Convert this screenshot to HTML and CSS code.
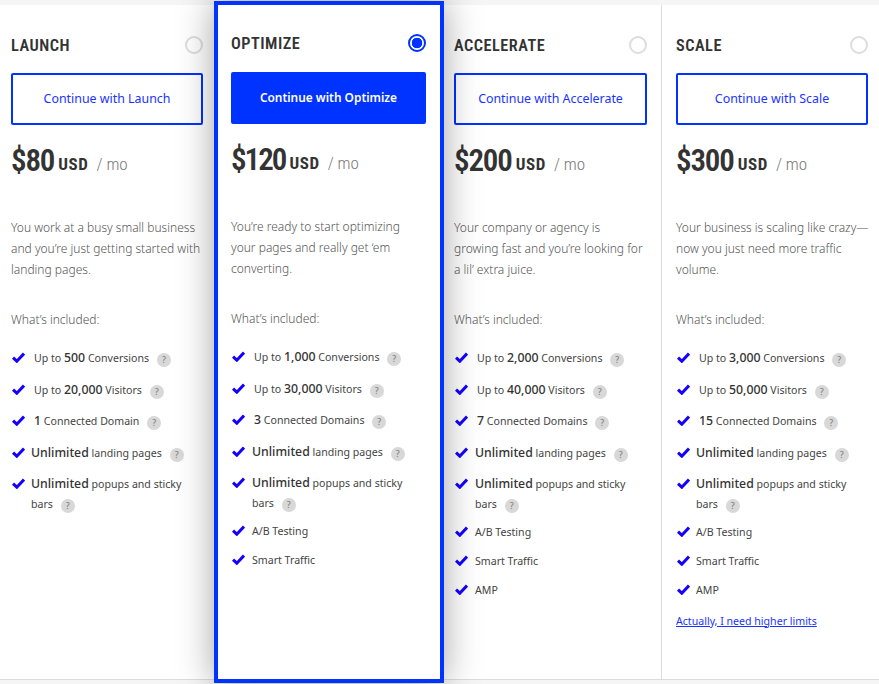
FILE: index.html
```html
<!DOCTYPE html>
<html lang="en">
<head>
<meta charset="utf-8">
<title>Plans</title>
<link rel="stylesheet" href="styles.css">
</head>
<body>
<svg class="defs" width="0" height="0" aria-hidden="true"><symbol id="chk" viewBox="0 0 13 11"><path d="M1 5.6 4.8 9.2 12 1.6" fill="none" stroke="currentColor" stroke-width="3"/></symbol></svg>
<main class="plans">
  <section class="plan plan-a">
    <header class="head"><h2>LAUNCH</h2><span class="radio"></span></header>
    <a class="btn">Continue with Launch</a>
    <p class="price"><b>$80</b> <strong>USD</strong> <span>/ mo</span></p>
    <p class="desc">You work at a busy small business and you’re just getting started with landing pages.</p>
    <p class="inc">What’s included:</p>
    <ul>
      <li><svg class="chk"><use href="#chk"/></svg><div class="tx in">Up to <b>500</b> Conversions <i>?</i></div></li>
      <li><svg class="chk"><use href="#chk"/></svg><div class="tx in">Up to <b>20,000</b> Visitors <i>?</i></div></li>
      <li><svg class="chk"><use href="#chk"/></svg><div class="tx in"><b>1</b> Connected Domain <i>?</i></div></li>
      <li><svg class="chk"><use href="#chk"/></svg><div class="tx"><b>Unlimited</b> landing pages <i>?</i></div></li>
      <li class="wrap"><svg class="chk"><use href="#chk"/></svg><div class="tx"><b>Unlimited</b> popups and sticky bars <i>?</i></div></li>
    </ul>
  </section>
  <section class="plan plan-b">
    <header class="head"><h2>OPTIMIZE</h2><span class="radio on"></span></header>
    <a class="btn solid">Continue with Optimize</a>
    <p class="price"><b>$120</b> <strong>USD</strong> <span>/ mo</span></p>
    <p class="desc">You’re ready to start optimizing your pages and really get ‘em converting.</p>
    <p class="inc">What’s included:</p>
    <ul>
      <li><svg class="chk"><use href="#chk"/></svg><div class="tx in">Up to <b>1,000</b> Conversions <i>?</i></div></li>
      <li><svg class="chk"><use href="#chk"/></svg><div class="tx in">Up to <b>30,000</b> Visitors <i>?</i></div></li>
      <li><svg class="chk"><use href="#chk"/></svg><div class="tx in"><b>3</b> Connected Domains <i>?</i></div></li>
      <li><svg class="chk"><use href="#chk"/></svg><div class="tx"><b>Unlimited</b> landing pages <i>?</i></div></li>
      <li class="wrap"><svg class="chk"><use href="#chk"/></svg><div class="tx"><b>Unlimited</b> popups and sticky bars <i>?</i></div></li>
      <li class="sm"><svg class="chk"><use href="#chk"/></svg><div class="tx">A/B Testing</div></li>
      <li class="sm"><svg class="chk"><use href="#chk"/></svg><div class="tx">Smart Traffic</div></li>
    </ul>
  </section>
  <section class="plan plan-c">
    <header class="head"><h2>ACCELERATE</h2><span class="radio"></span></header>
    <a class="btn">Continue with Accelerate</a>
    <p class="price"><b>$200</b> <strong>USD</strong> <span>/ mo</span></p>
    <p class="desc">Your company or agency is growing fast and you’re looking for a lil’ extra juice.</p>
    <p class="inc">What’s included:</p>
    <ul>
      <li><svg class="chk"><use href="#chk"/></svg><div class="tx in">Up to <b>2,000</b> Conversions <i>?</i></div></li>
      <li><svg class="chk"><use href="#chk"/></svg><div class="tx in">Up to <b>40,000</b> Visitors <i>?</i></div></li>
      <li><svg class="chk"><use href="#chk"/></svg><div class="tx in"><b>7</b> Connected Domains <i>?</i></div></li>
      <li><svg class="chk"><use href="#chk"/></svg><div class="tx"><b>Unlimited</b> landing pages <i>?</i></div></li>
      <li class="wrap"><svg class="chk"><use href="#chk"/></svg><div class="tx"><b>Unlimited</b> popups and sticky bars <i>?</i></div></li>
      <li class="sm"><svg class="chk"><use href="#chk"/></svg><div class="tx">A/B Testing</div></li>
      <li class="sm"><svg class="chk"><use href="#chk"/></svg><div class="tx">Smart Traffic</div></li>
      <li class="sm"><svg class="chk"><use href="#chk"/></svg><div class="tx">AMP</div></li>
    </ul>
  </section>
  <section class="plan plan-d">
    <header class="head"><h2>SCALE</h2><span class="radio"></span></header>
    <a class="btn">Continue with Scale</a>
    <p class="price"><b>$300</b> <strong>USD</strong> <span>/ mo</span></p>
    <p class="desc">Your business is scaling like crazy—<br>now you just need more traffic volume.</p>
    <p class="inc">What’s included:</p>
    <ul>
      <li><svg class="chk"><use href="#chk"/></svg><div class="tx in">Up to <b>3,000</b> Conversions <i>?</i></div></li>
      <li><svg class="chk"><use href="#chk"/></svg><div class="tx in">Up to <b>50,000</b> Visitors <i>?</i></div></li>
      <li><svg class="chk"><use href="#chk"/></svg><div class="tx in"><b>15</b> Connected Domains <i>?</i></div></li>
      <li><svg class="chk"><use href="#chk"/></svg><div class="tx"><b>Unlimited</b> landing pages <i>?</i></div></li>
      <li class="wrap"><svg class="chk"><use href="#chk"/></svg><div class="tx"><b>Unlimited</b> popups and sticky bars <i>?</i></div></li>
      <li class="sm"><svg class="chk"><use href="#chk"/></svg><div class="tx">A/B Testing</div></li>
      <li class="sm"><svg class="chk"><use href="#chk"/></svg><div class="tx">Smart Traffic</div></li>
      <li class="sm"><svg class="chk"><use href="#chk"/></svg><div class="tx">AMP</div></li>
    </ul>
    <a class="limits">Actually, I need higher limits</a>
  </section>
</main>
</body>
</html>
```
FILE: styles.css
```css
html, body { margin: 0; height: 684px; overflow: hidden; background: #f5f5f5; }
body { font-family: "Noto Sans", sans-serif; color: #333; }
.defs { position: absolute; }
.plans {
  display: flex;
  margin-top: 5px;
  height: 674px;
  background: #fff;
  border-bottom: 1px solid #dcdcdc;
}
.plan { box-sizing: border-box; padding-top: 31px; background: #fff; }
.plan-a { width: 214px; padding-left: 11px; }
.plan-b {
  width: 230px;
  margin: -4px 0 -4px;
  height: 682px;
  flex: none;
  border: 4px solid #0033ff;
  padding: 29px 0 0 13px;
  position: relative;
  box-shadow: 0 0 34px rgba(0, 0, 0, .36);
}
.plan-c { width: 218px; padding-left: 10px; border-right: 1px solid #dcdcdc; }
.plan-d { width: 217px; padding-left: 14px; }
.head { display: flex; justify-content: space-between; align-items: center; height: 18px; width: 192px; }
.plan-b .head, .plan-b .btn { width: 195px; }
.plan-c .head, .plan-c .btn { width: 193px; }
h2 { margin: 2px 0 0; font: 600 16.3px/18px "Roboto", sans-serif; font-stretch: 75%; letter-spacing: .5px; color: #333; }
.radio { box-sizing: border-box; width: 18px; height: 18px; border: 2px solid #ddd; border-radius: 50%; background: #fff; }
.radio.on { border-color: #0033ff; background: radial-gradient(circle, #0033ff 5px, #fff 5.6px); }
.btn {
  box-sizing: border-box;
  display: flex;
  align-items: center;
  justify-content: center;
  width: 192px;
  height: 52px;
  margin-top: 19px;
  padding-bottom: 2px;
  border: 2px solid #0033ff;
  border-radius: 2px;
  color: #1a33ff;
  font-size: 12.4px;
}
.plan-b .btn { margin-top: 20px; }
.btn.solid { background: #0033ff; color: #fff; font-weight: 600; font-size: 11.9px; }
.price { margin: 16px 0 0; height: 40px; line-height: 40px; white-space: nowrap; }
.price b { font: 600 31px/40px "Roboto", sans-serif; font-stretch: 75%; letter-spacing: -1.2px; color: #333; }
.plan-b .price b { letter-spacing: -2px; }
.price strong { font: 700 17px/40px "Roboto", sans-serif; font-stretch: 75%; letter-spacing: .5px; vertical-align: 1px; }
.price span { font: 300 17px/40px "Roboto", sans-serif; font-stretch: 87%; color: #777; margin-left: 4px; vertical-align: 1px; }
.desc { margin: 36px 0 0; width: 192px; font-size: 12px; font-weight: 300; line-height: 21px; color: #555; height: 63px; }
.plan-d .desc { width: 200px; }
.inc { margin: 30px 0 0; font-size: 12px; font-weight: 300; line-height: 20px; color: #555; }
ul { list-style: none; margin: 18px 0 0; padding: 0; width: 192px; }
li { display: flex; margin-bottom: 11.5px; }
li.wrap { margin-bottom: 7.5px; }
li.sm { margin-bottom: 9px; }
.chk { flex: none; width: 13px; height: 11px; margin: 4px 6px 0 1px; color: #1400ff; }
.plan-b .chk, .plan-c .chk { margin-right: 7px; }
.tx { font-size: 10.6px; line-height: 20px; color: #444; }
.tx.in { margin-left: 3px; }
.plan-b .tx.in, .plan-c .tx.in { margin-left: 2px; }
.tx b { font-size: 12.3px; font-weight: 500; color: #333; }
.tx i {
  display: inline-flex;
  align-items: center;
  justify-content: center;
  width: 14px;
  height: 14px;
  margin-left: 5px;
  border-radius: 50%;
  background: #d8d8d8;
  color: #777;
  font: 400 9px/14px "Noto Sans", sans-serif;
  vertical-align: -1px;
}
.limits { display: block; margin-top: 11px; font-size: 10.6px; line-height: 20px; color: #1a33ff; text-decoration: underline; }
```
